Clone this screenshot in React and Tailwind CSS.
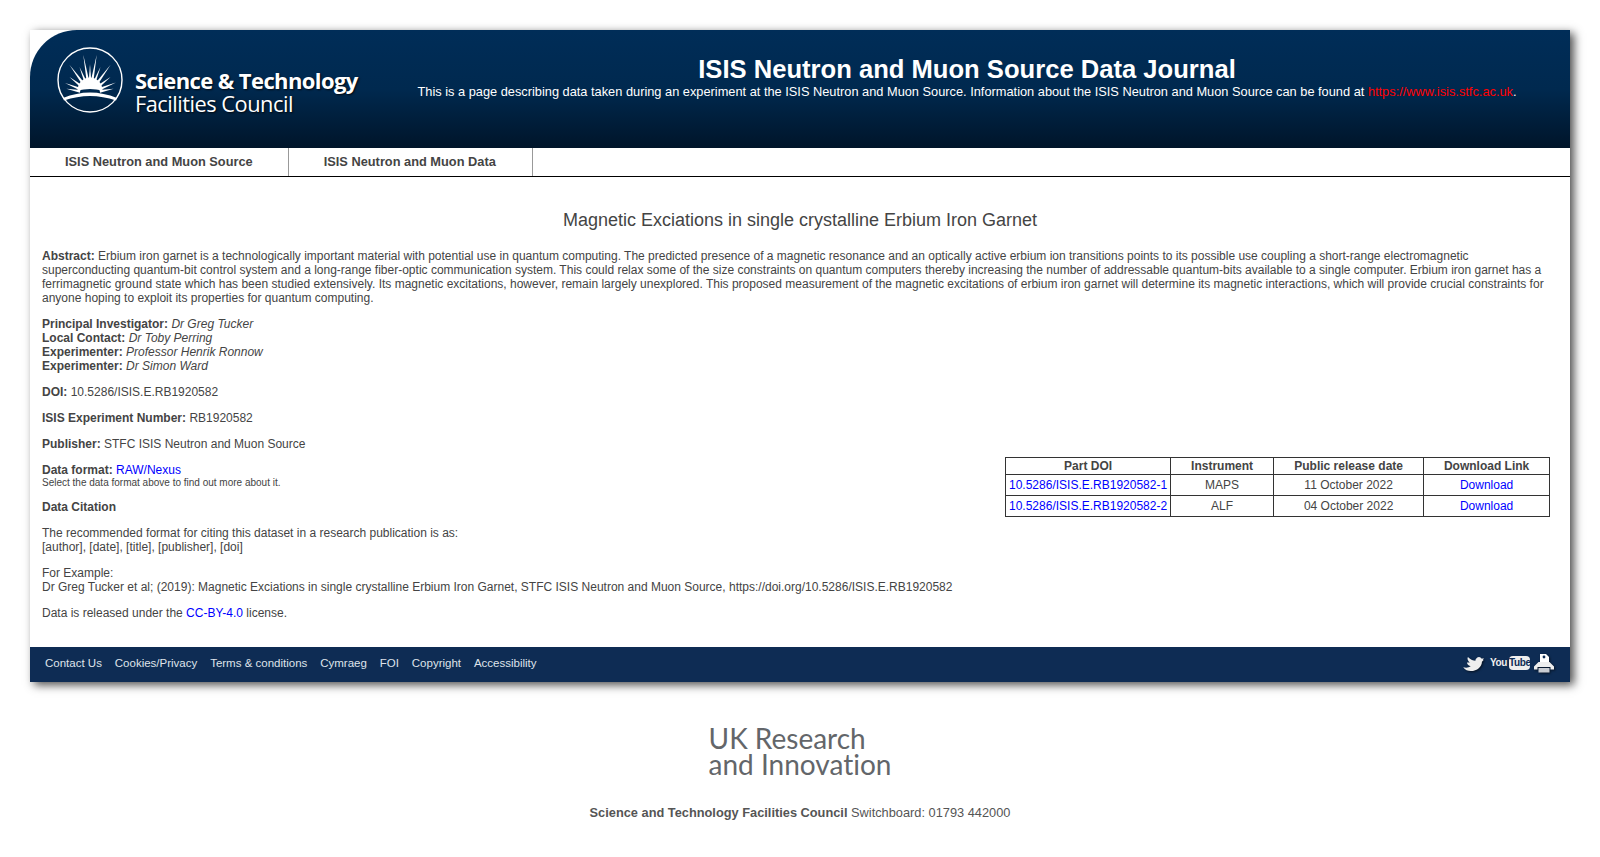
const footerLinks = ["Contact Us", "Cookies/Privacy", "Terms & conditions", "Cymraeg", "FOI", "Copyright", "Accessibility"];

const parts = [
  { doi: "10.5286/ISIS.E.RB1920582-1", instrument: "MAPS", date: "11 October 2022" },
  { doi: "10.5286/ISIS.E.RB1920582-2", instrument: "ALF", date: "04 October 2022" },
];

// rays of the sunburst, angle in degrees from straight up and tip distance
const rays = [
  [-80, 24], [-68, 27], [-52, 26], [-36, 35], [-22, 28], [-10, 39], [0, 29], [10, 39], [22, 28], [36, 35], [52, 26], [68, 28], [80, 24],
];

function StfcLogo() {
  return (
    <svg width="66" height="68" viewBox="0 0 66 68" className="shrink-0">
      <circle cx="33" cy="34" r="32" fill="none" stroke="#fff" strokeWidth="1.4" />
      <path d="M20.5 44.5 A12.5 13 0 0 1 45.5 44.5 Q33 41.5 20.5 44.5 Z" fill="#fff" />
      {rays.map(([angle, len], i) => (
        <polygon
          key={i}
          points={`31.6,37 34.4,37 33,${47 - len}`}
          fill="#fff"
          transform={`rotate(${angle} 33 47)`}
        />
      ))}
      <path d="M6 52 Q33 41 60 52 L59 54.5 Q33 45.5 7 54.5 Z" fill="#fff" />
    </svg>
  );
}

function TwitterBird() {
  return (
    <svg width="21" height="15" viewBox="0 0 22 16" className="mr-[6px] drop-shadow-[1px_1px_1px_rgba(0,0,0,0.6)]">
      <path d="M0 12 C4 13 6 12 8 11 C5 10 4 8 4 7 C5 7 6 7 7 7 C5 5 4 3 5 1 C8 4 11 5 13 5 C13 3 15 1 17 1 C18 1 19 2 20 3 L22 2 L21 4 L22 4 L20 6 C20 11 15 16 8 16 C5 16 2 15 0 12 Z" fill="#eee" />
    </svg>
  );
}

function PrintIcon() {
  return (
    <svg width="20" height="19" viewBox="0 0 20 19" className="drop-shadow-[1px_1px_1px_rgba(0,0,0,0.6)]">
      <path d="M6 0 H12 L15 3 V9 H6 Z" fill="#fff" />
      <circle cx="10" cy="3" r="1.4" fill="#0e2c54" />
      <path d="M4.5 8 H15.5 L20 12.5 V15.5 H16.5 V13 H3.5 V15.5 H0 V12.5 Z" fill="#eee" />
      <rect x="4.5" y="14" width="11" height="4.5" fill="#c9ccd2" />
    </svg>
  );
}

function App() {
  return (
    <div className="min-h-[857px] bg-white pt-[30px] font-['Liberation_Sans',sans-serif] text-[12px] leading-[14px] text-[#444]">
      <div className="mx-[30px] bg-white shadow-[4px_3px_9px_rgba(0,0,0,0.7)]">
        <header className="flex h-[118px] rounded-tl-[47px] bg-gradient-to-b from-[#002d58] via-[#00294f] to-[#00152a]">
          <div className="flex w-[360px] shrink-0 pt-[16px] pl-[27px]">
            <StfcLogo />
            <div className="mt-[22px] ml-[12px] font-['Open_Sans',sans-serif] text-white [text-shadow:1px_1px_2px_rgba(0,0,0,0.8)]">
              <div className="text-[22px] font-bold leading-[25px] tracking-[-0.6px]">Science &amp; Technology</div>
              <div className="text-[21.8px] leading-[21px] tracking-[-0.5px]">Facilities Council</div>
            </div>
          </div>
          <div className="flex-1 pt-[24px] pr-[26px] text-center text-white">
            <h1 className="text-[25.6px] font-bold leading-[30px]">ISIS Neutron and Muon Source Data Journal</h1>
            <p className="text-[12.8px] leading-[15px]">
              This is a page describing data taken during an experiment at the ISIS Neutron and Muon Source. Information about the ISIS Neutron and Muon Source can be found at{" "}
              <a className="text-[#f00]">https://www.isis.stfc.ac.uk</a>.
            </p>
          </div>
        </header>

        <nav className="flex h-[29px] border-b border-black text-[12.8px] font-bold text-[#444]">
          <a className="flex items-center border-r border-[#999] px-[35px]">ISIS Neutron and Muon Source</a>
          <a className="flex items-center border-r border-[#999] pr-[36px] pl-[35px]">ISIS Neutron and Muon Data</a>
        </nav>

        <main className="px-3 pt-[33px] pb-[27px]">
          <h2 className="mb-[18px] text-center text-[18px] leading-[21px]">Magnetic Exciations in single crystalline Erbium Iron Garnet</h2>
          <p className="mb-3">
            <b>Abstract:</b> Erbium iron garnet is a technologically important material with potential use in quantum computing. The predicted presence of a magnetic resonance and an optically active erbium ion transitions points to its possible use coupling a short-range electromagnetic superconducting quantum-bit control system and a long-range fiber-optic communication system. This could relax some of the size constraints on quantum computers thereby increasing the number of addressable quantum-bits available to a single computer. Erbium iron garnet has a ferrimagnetic ground state which has been studied extensively. Its magnetic excitations, however, remain largely unexplored. This proposed measurement of the magnetic excitations of erbium iron garnet will determine its magnetic interactions, which will provide crucial constraints for anyone hoping to exploit its properties for quantum computing.
          </p>
          <p className="mb-3">
            <b>Principal Investigator:</b> <i>Dr Greg Tucker</i><br />
            <b>Local Contact:</b> <i>Dr Toby Perring</i><br />
            <b>Experimenter:</b> <i>Professor Henrik Ronnow</i><br />
            <b>Experimenter:</b> <i>Dr Simon Ward</i>
          </p>
          <p className="mb-3"><b>DOI:</b> 10.5286/ISIS.E.RB1920582</p>
          <p className="mb-3"><b>ISIS Experiment Number:</b> RB1920582</p>
          <p className="mb-3"><b>Publisher:</b> STFC ISIS Neutron and Muon Source</p>

          <table className="float-right mr-[8px] -mt-[6px] w-[545px] border-collapse border border-[#333] text-center">
            <thead>
              <tr className="h-[17px]">
                <th className="border border-[#333] px-[3px]">Part DOI</th>
                <th className="border border-[#333] px-[3px]">Instrument</th>
                <th className="border border-[#333] px-[3px]">Public release date</th>
                <th className="border border-[#333] px-[3px]">Download Link</th>
              </tr>
            </thead>
            <tbody>
              {parts.map((part) => (
                <tr key={part.doi} className="h-[21px]">
                  <td className="w-[165px] whitespace-nowrap border border-[#333] px-[3px]"><a className="text-[#00f]">{part.doi}</a></td>
                  <td className="w-[103px] border border-[#333] px-[3px]">{part.instrument}</td>
                  <td className="w-[150px] border border-[#333] px-[3px]">{part.date}</td>
                  <td className="border border-[#333] px-[3px]"><a className="text-[#00f]">Download</a></td>
                </tr>
              ))}
            </tbody>
          </table>

          <p className="mb-3">
            <b>Data format:</b> <a className="text-[#00f]">RAW/Nexus</a><br />
            <span className="block text-[10px] leading-[11px]">Select the data format above to find out more about it.</span>
          </p>
          <p className="mb-3"><b>Data Citation</b></p>
          <p className="mb-3">
            The recommended format for citing this dataset in a research publication is as:<br />
            [author], [date], [title], [publisher], [doi]
          </p>
          <p className="mb-3">
            For Example:<br />
            Dr Greg Tucker et al; (2019): Magnetic Exciations in single crystalline Erbium Iron Garnet, STFC ISIS Neutron and Muon Source, https://doi.org/10.5286/ISIS.E.RB1920582
          </p>
          <p>Data is released under the <a className="text-[#00f]">CC-BY-4.0</a> license.</p>
        </main>

        <footer className="flex h-[35px] items-center justify-between bg-[#0e2c54] pr-[16px] pl-[15px] text-[#dfe3ea]">
          <div className="flex gap-[12.9px] pb-[3px] text-[11.5px]">
            {footerLinks.map((link) => (
              <a key={link}>{link}</a>
            ))}
          </div>
          <div className="flex items-center pb-[3px] text-[#eee]">
            <TwitterBird />
            <span className="mr-[2px] text-[10px] font-bold tracking-[-0.4px]">You</span>
            <span className="mr-[4px] w-[21px] rounded-[4px] bg-[#eee] text-center text-[10px] font-bold leading-[14px] tracking-[-0.4px] text-[#0e2c54]">Tube</span>
            <PrintIcon />
          </div>
        </footer>
      </div>

      <div className="mt-[43px] flex justify-center">
        <div className="font-['Lato',sans-serif] text-[28px] leading-[26px] text-[#63666a] [font-variant-ligatures:none]">
          UK Research<br />and Innovation
        </div>
      </div>
      <p className="mt-[28px] text-center text-[12.8px] leading-[15px] text-[#555]">
        <b>Science and Technology Facilities Council</b> Switchboard: 01793 442000
      </p>
    </div>
  );
}

export default App;
